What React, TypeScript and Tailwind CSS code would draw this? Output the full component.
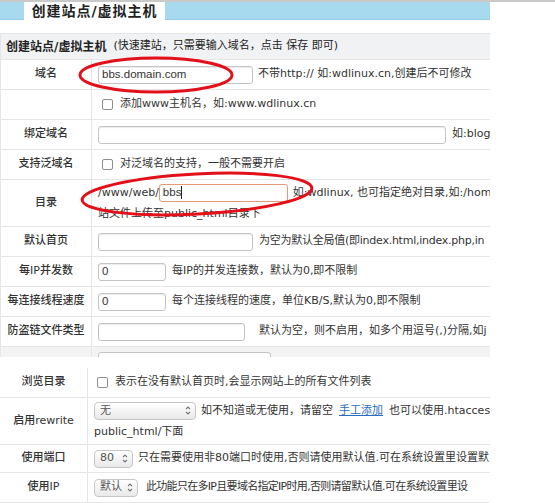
import React from 'react';

const Checkbox = () => (
  <span className="inline-block w-[11px] h-[11px] border border-[#8f8f8f] rounded-[2px] bg-white shrink-0" />
);

const TextInput = ({ value = '', w, focus = false }: { value?: string; w: string; focus?: boolean }) => (
  <div
    className={`${w} h-[18px] shrink-0 rounded-[3px] border bg-white px-[3px] flex items-center font-['Liberation_Sans',sans-serif] text-[11.5px] text-[#333] ${
      focus ? 'border-[#e39a7a]' : 'border-[#c4c4c4] shadow-[inset_0_1px_1px_rgba(0,0,0,0.08)]'
    }`}
  >
    {value}
    {focus ? <span className="w-px h-[13px] bg-[#222]" /> : null}
  </div>
);

const Select = ({ value, w }: { value: string; w: string }) => (
  <div
    className={`${w} h-[18px] shrink-0 rounded-[4px] border border-[#c6c6c6] bg-gradient-to-b from-white to-[#e9e9e9] flex items-center justify-between pl-[5px] pr-[4px] text-[11px] text-[#555]`}
  >
    <span>{value}</span>
    <svg width="6" height="11" viewBox="0 0 6 11" fill="none" stroke="#777" strokeWidth="1.1">
      <path d="M1 4 L3 2 L5 4" />
      <path d="M1 7 L3 9 L5 7" />
    </svg>
  </div>
);

const Row = ({
  label,
  h,
  lw = 'w-[91px]',
  bg = 'bg-white',
  children,
}: {
  label?: string;
  h: string;
  lw?: string;
  bg?: string;
  children?: React.ReactNode;
}) => (
  <div className={`flex ${h} ${bg} border-b border-[#e5e5e5] overflow-hidden`}>
    <div className={`${lw} shrink-0 border-r border-[#e5e5e5] flex items-center justify-center text-[11px] font-medium text-[#333]`}>
      {label}
    </div>
    <div className="flex-1 min-w-0 flex flex-col justify-center pl-[6px] text-[11px] text-[#333] whitespace-nowrap overflow-hidden">
      {children}
    </div>
  </div>
);

export default function App() {
  return (
    <div className="relative w-[555px] h-[503px] overflow-hidden bg-white font-['DejaVu_Sans','Noto_Sans_CJK_SC',sans-serif]">
      <div className="h-[2px] bg-[#c9c9c9]" />
      <div className="w-[490px] h-[18px] bg-[#a7d9ef] border-b border-[#93cce8] pl-[24px]">
        <div className="w-[141px] h-[18px] bg-white flex items-center justify-center text-[14px] font-bold text-[#222] tracking-[1px]">
          创建站点/虚拟主机
        </div>
      </div>

      <div className="w-[490px] mt-[13px] border-l border-[#e5e5e5] overflow-hidden">
        <div className="h-[27px] bg-[#f1f2f4] border-y border-[#e6e6e6] flex items-center pl-[5px] text-[11px] text-[#222] whitespace-nowrap">
          <span className="text-[12px] font-bold mr-[7px]">创建站点/虚拟主机</span>
          (快速建站，只需要输入域名，点击 保存 即可)
        </div>

        <Row label="域名" h="h-[30px]">
          <div className="flex items-center gap-[5px]">
            <TextInput value="bbs.domain.com" w="w-[155px]" />
            <span>不带http:// 如:wdlinux.cn,创建后不可修改</span>
          </div>
        </Row>
        <Row h="h-[30px]">
          <div className="flex items-center gap-[7px] pl-[4px]">
            <Checkbox />
            <span>添加www主机名，如:www.wdlinux.cn</span>
          </div>
        </Row>
        <Row label="绑定域名" h="h-[30px]">
          <div className="flex items-center gap-[6px]">
            <TextInput w="w-[348px]" />
            <span>如:blog</span>
          </div>
        </Row>
        <Row label="支持泛域名" h="h-[30px]">
          <div className="flex items-center gap-[7px] pl-[4px]">
            <Checkbox />
            <span>对泛域名的支持，一般不需要开启</span>
          </div>
        </Row>
        <Row label="目录" h="h-[47px]">
          <div className="flex items-center">
            <span>/www/web/</span>
            <TextInput value="bbs" w="w-[129px]" focus />
            <span className="ml-[5px]">如:wdlinux, 也可指定绝对目录,如:/hom</span>
          </div>
          <div className="mt-[4px]">站文件上传至public_html目录下</div>
        </Row>
        <Row label="默认首页" h="h-[30px]">
          <div className="flex items-center gap-[6px]">
            <TextInput w="w-[155px]" />
            <span className="tracking-[-0.25px]">为空为默认全局值(即index.html,index.php,in</span>
          </div>
        </Row>
        <Row label="每IP并发数" h="h-[30px]">
          <div className="flex items-center gap-[6px]">
            <TextInput value="0" w="w-[68px]" />
            <span>每IP的并发连接数，默认为0,即不限制</span>
          </div>
        </Row>
        <Row label="每连接线程速度" h="h-[30px]">
          <div className="flex items-center gap-[6px]">
            <TextInput value="0" w="w-[68px]" />
            <span>每个连接线程的速度，单位KB/S,默认为0,即不限制</span>
          </div>
        </Row>
        <Row label="防盗链文件类型" h="h-[30px]">
          <div className="flex items-center gap-[14px]">
            <TextInput w="w-[147px]" />
            <span>默认为空，则不启用，如多个用逗号(,)分隔,如j</span>
          </div>
        </Row>
        <div className="flex h-[10px] bg-[#f3f3f3] overflow-hidden">
          <div className="w-[91px] shrink-0 border-r border-[#e5e5e5]" />
          <div className="pl-[6px] pt-[5px]">
            <div className="w-[173px] h-[18px] rounded-[3px] border border-[#c4c4c4] bg-white" />
          </div>
        </div>
      </div>

      <div className="w-[490px] mt-[11px] overflow-hidden">
        <Row label="浏览目录" h="h-[30px]" lw="w-[88px]">
          <div className="flex items-center gap-[7px] pl-[3px]">
            <Checkbox />
            <span>表示在没有默认首页时,会显示网站上的所有文件列表</span>
          </div>
        </Row>
        <Row label="启用rewrite" h="h-[47px]" lw="w-[88px]">
          <div className="flex items-center gap-[5px]">
            <Select value="无" w="w-[102px]" />
            <span>
              如不知道或无使用，请留空
              <span className="text-[#2a6cc0] underline mx-[6px]">手工添加</span>也可以使用.htacces
            </span>
          </div>
          <div className="mt-[4px]">public_html/下面</div>
        </Row>
        <Row label="使用端口" h="h-[28px]" lw="w-[88px]">
          <div className="flex items-center gap-[5px]">
            <Select value="80" w="w-[39px]" />
            <span>只在需要使用非80端口时使用,否则请使用默认值.可在系统设置里设置默</span>
          </div>
        </Row>
        <Row label="使用IP" h="h-[30px]" lw="w-[88px]">
          <div className="flex items-center gap-[8px]">
            <Select value="默认" w="w-[44px]" />
            <span className="tracking-[-0.7px]">此功能只在多IP且要域名指定IP时用,否则请留默认值.可在系统设置里设</span>
          </div>
        </Row>
      </div>

      <svg className="absolute inset-0 pointer-events-none" width="555" height="503">
        <ellipse cx="156" cy="75" rx="76" ry="17" fill="none" stroke="#e3101a" strokeWidth="3" />
        <ellipse cx="197" cy="194" rx="115" ry="20" fill="none" stroke="#e3101a" strokeWidth="3" transform="rotate(-3 197 194)" />
      </svg>
    </div>
  );
}
